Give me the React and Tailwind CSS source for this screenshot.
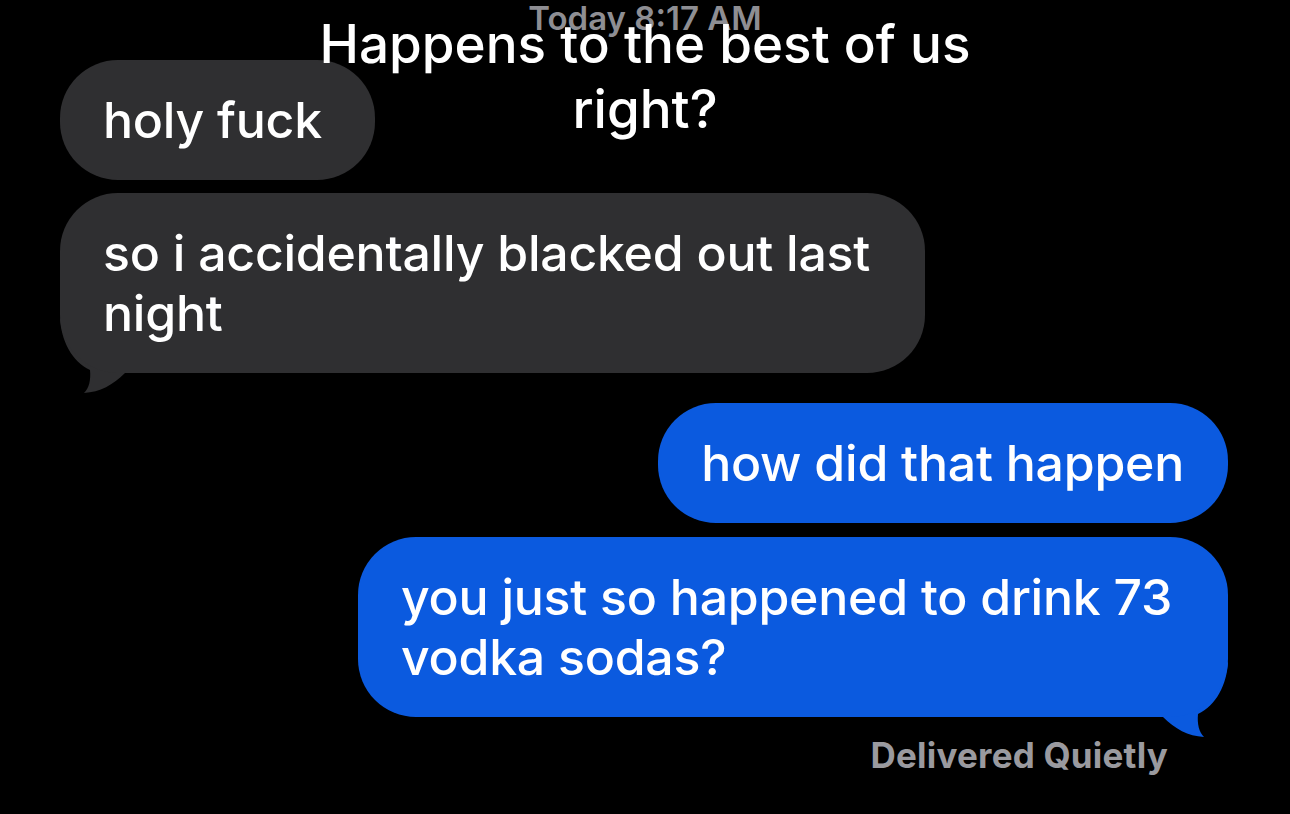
import React from 'react'

const font = { fontFamily: 'Inter, "Noto Sans", sans-serif' }

function GrayTail() {
  return (
    <svg className="absolute left-0 bottom-[-22px] w-[70px] h-[80px]" viewBox="0 0 70 80" fill="#2f2f31">
      <path d="M0,3 C1,25 12,47 30,55 C31,65 29,73 24,78 C40,77 53,70 65,58 Z" />
    </svg>
  )
}

function BlueTail() {
  return (
    <svg className="absolute right-0 bottom-[-22px] w-[70px] h-[80px]" viewBox="0 0 70 80" fill="#0b5adf">
      <path d="M70,3 C69,25 58,47 40,55 C39,65 41,73 46,78 C30,77 17,70 5,58 Z" />
    </svg>
  )
}

function Bubble({ text, from, width, tail }) {
  const isMe = from === 'me'
  return (
    <div className={`relative ${isMe ? 'self-end' : 'self-start'}`}>
      <div
        className={`relative z-10 rounded-[58px] pl-[43px] pr-[44px] py-[30px] text-[50px] leading-[60px] font-medium text-white tracking-[-0.25px] ${
          isMe ? 'bg-[#0b5adf]' : 'bg-[#2f2f31]'
        } ${width || ''}`}
      >
        {text}
      </div>
      {tail && (isMe ? <BlueTail /> : <GrayTail />)}
    </div>
  )
}

export default function App() {
  return (
    <div className="relative w-[1290px] h-[814px] overflow-hidden bg-black" style={font}>
      {/* timestamp */}
      <div className="h-[60px] pt-[1px] text-center text-[33px] leading-[34px] font-semibold text-[#8e8e93]">
        Today 8:17 AM
      </div>

      {/* thread */}
      <div className="flex flex-col pl-[60px] pr-[62px]">
        <Bubble text="holy fuck" from="them" width="w-[315px]" />
        <div className="mt-[13px] flex flex-col">
          <Bubble text="so i accidentally blacked out last night" from="them" width="w-[865px]" tail />
        </div>
        <div className="mt-[30px] flex flex-col">
          <Bubble text="how did that happen" from="me" />
        </div>
        <div className="mt-[14px] flex flex-col">
          <Bubble text="you just so happened to drink 73 vodka sodas?" from="me" width="w-[870px]" tail />
        </div>
        <div className="mt-[18px] mr-[60px] self-end text-[35px] leading-[40px] font-bold tracking-[0.2px] text-[#9a9a9f]">
          Delivered Quietly
        </div>
      </div>

      {/* caption laid over the chat */}
      <div className="absolute inset-x-0 top-[12px] z-20 text-center text-[53px] leading-[65px] font-medium text-white">
        Happens to the best of us
        <br />
        right?
      </div>
    </div>
  )
}
